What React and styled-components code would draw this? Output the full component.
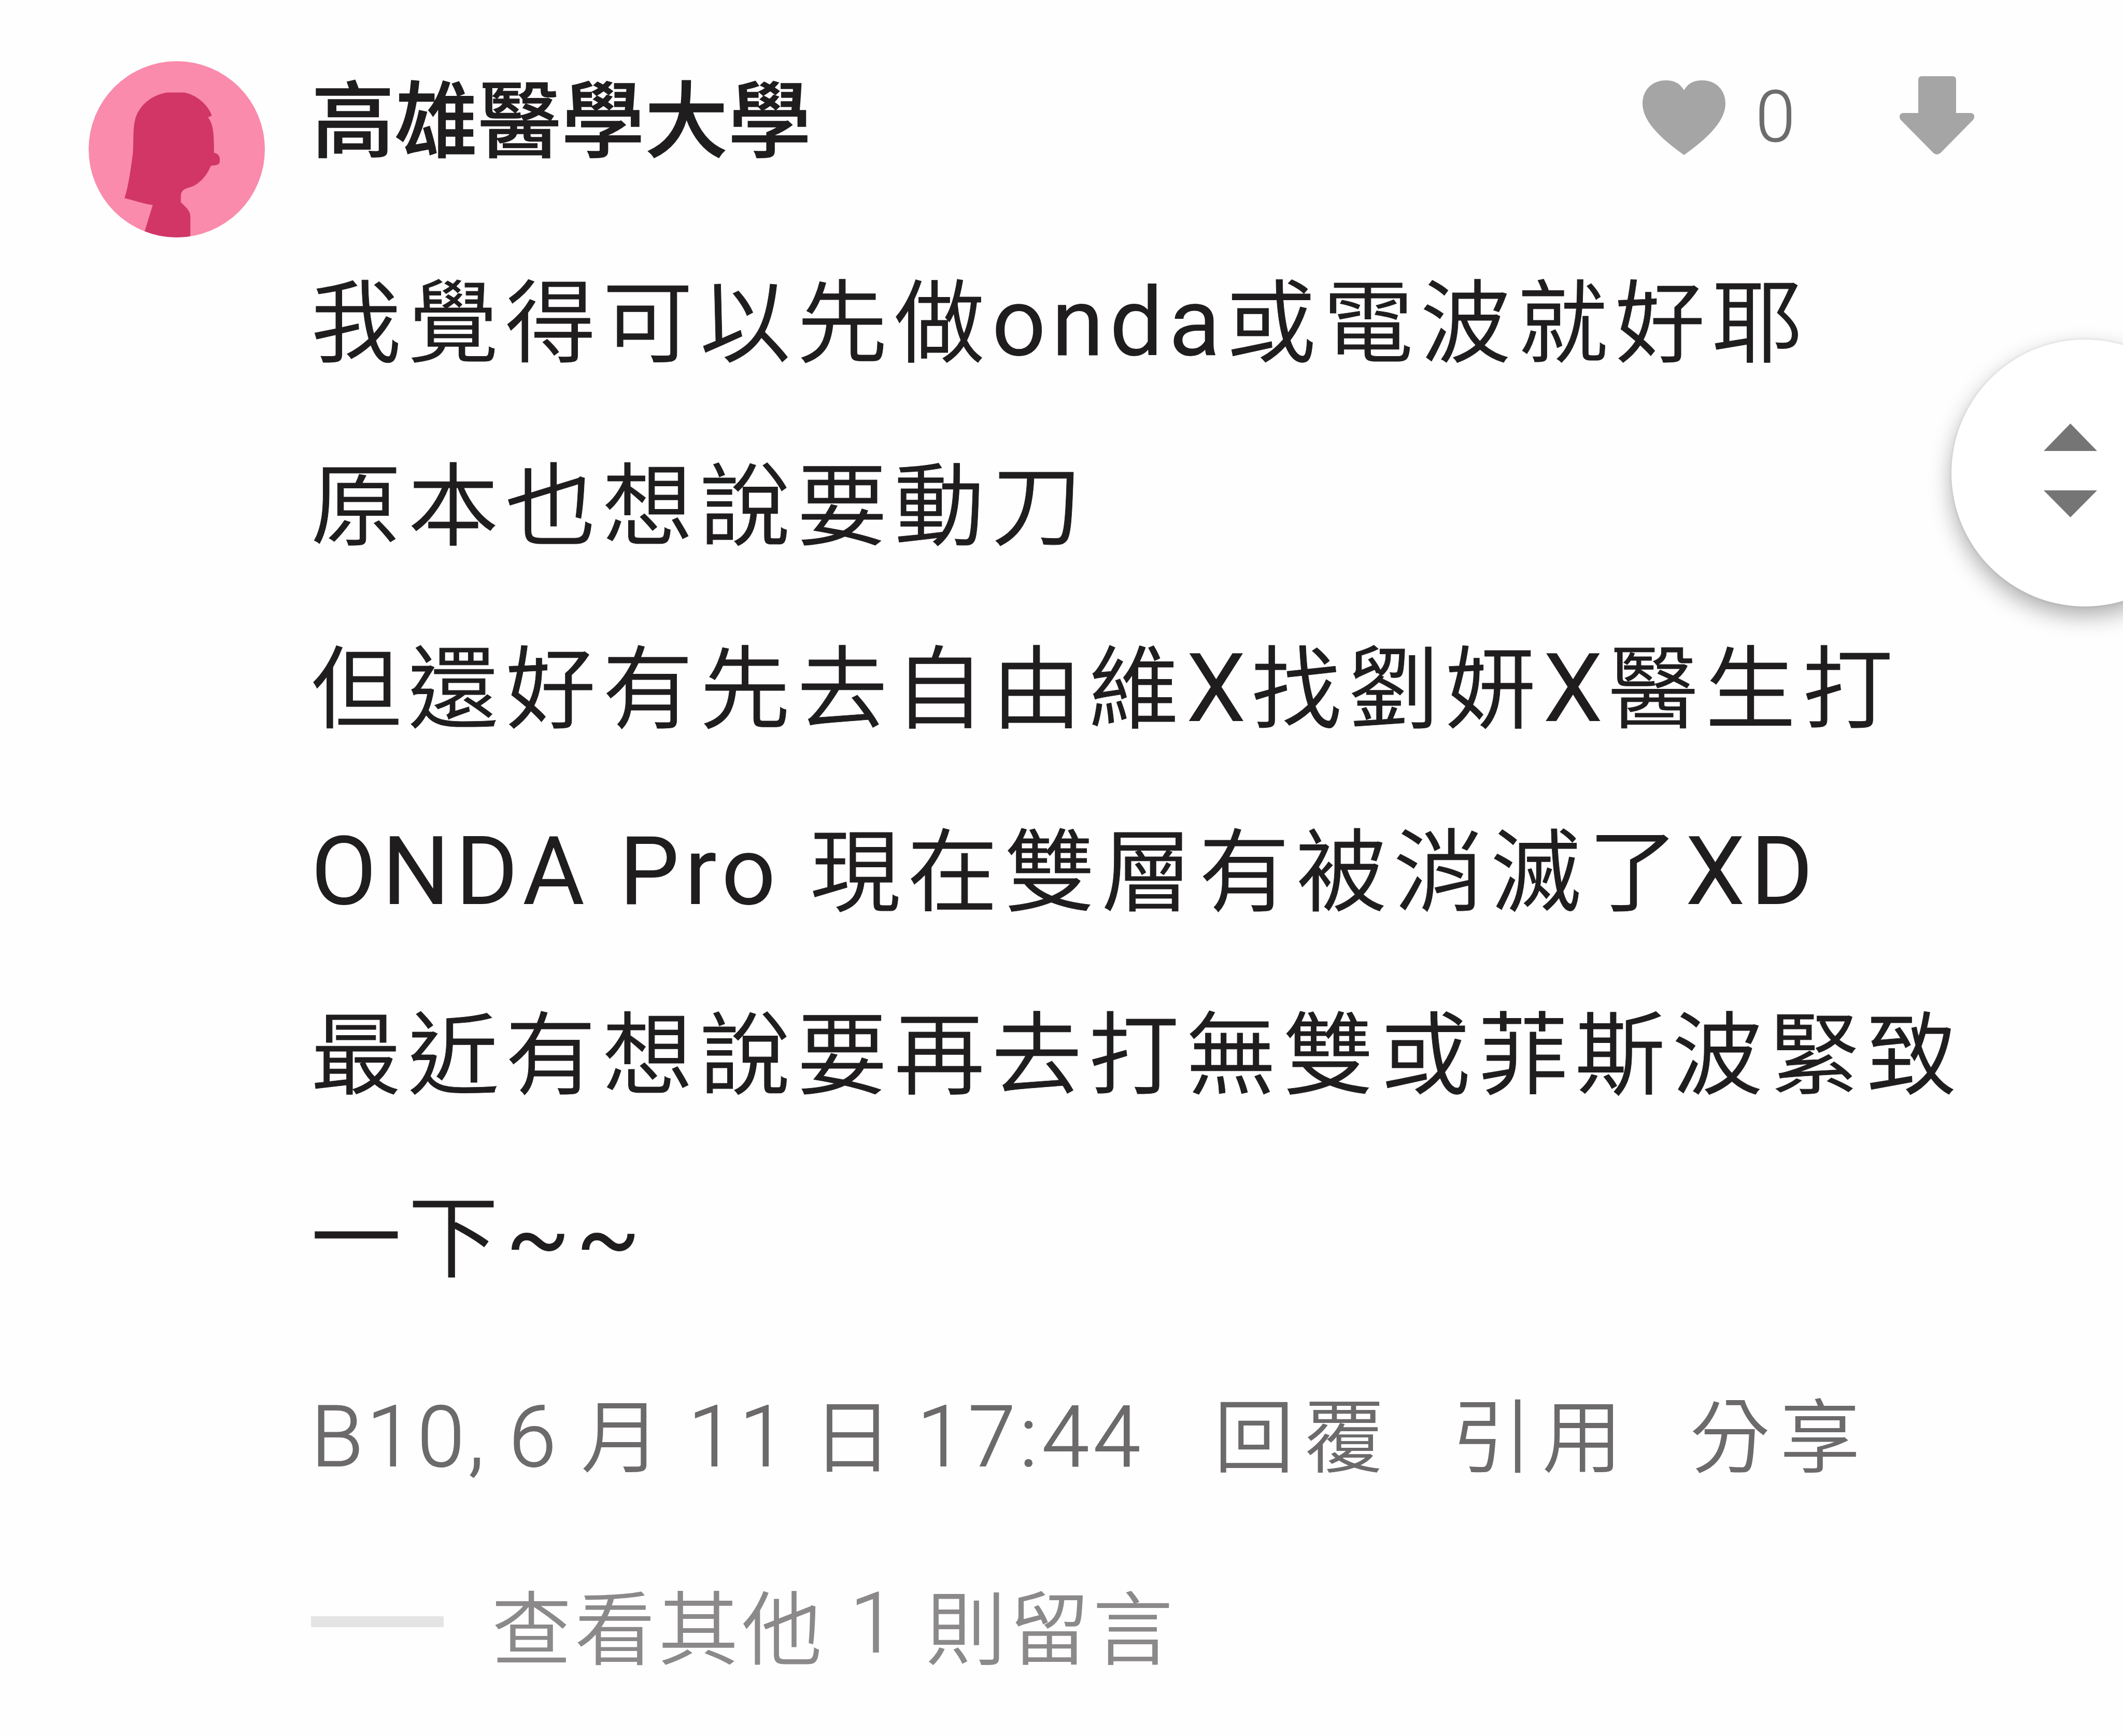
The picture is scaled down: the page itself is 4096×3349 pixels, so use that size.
import React from "react";
import styled, { createGlobalStyle } from "styled-components";

const GlobalStyle = createGlobalStyle`
  html, body { margin: 0; padding: 0; background: #fefefe; }
  * { box-sizing: border-box; }
`;

const Page = styled.main`
  position: relative;
  width: 4096px;
  height: 3349px;
  overflow: hidden;
  background: #fefefe;
  color: #1f1d1d;
  font-family: "Noto Sans CJK TC", sans-serif;
`;

const Comment = styled.article`
  display: grid;
  grid-template-columns: 340px 1fr;
  column-gap: 89px;
  padding: 118px 0 0 171px;
`;

const Avatar = styled.svg`
  display: block;
  width: 340px;
  height: 340px;
`;

const Content = styled.div`
  display: flex;
  flex-direction: column;
`;

const Header = styled.header`
  display: flex;
  align-items: center;
  height: 224px;
  margin-bottom: 91px;
`;

const Author = styled.h1`
  flex: none;
  width: 2569px;
  margin: -18px 0 0;
  padding-left: 1px;
  font-size: 160px;
  font-weight: 500;
  line-height: 224px;
  letter-spacing: 0.8px;
  -webkit-text-stroke: 1.6px currentColor;
`;

const LikeCount = styled.span`
  width: 78px;
  margin: -8px 200px 0 58px;
  color: #6c6c6c;
  font: 300 138px/224px Roboto, sans-serif;
  -webkit-text-stroke: 1px currentColor;
`;

const Icon = styled.svg`
  flex: none;
  display: block;
  width: ${(p) => p.$width}px;
  height: 152px;
  margin-top: -15px;
  fill: #a6a5a5;
`;

const Body = styled.div`
  font-size: 174px;
  font-weight: 350;
  line-height: 353px;
  letter-spacing: 13.6px;
  -webkit-text-stroke: 1px currentColor;
`;

const Line = styled.p`
  margin: 0;
  height: 353px;
  white-space: pre;
`;

const Latin = styled.span`
  font-family: Roboto, sans-serif;
  font-size: ${(p) => p.$size}px;
  font-weight: ${(p) => p.$weight || 400};
  letter-spacing: ${(p) => p.$spacing}px;
  -webkit-text-stroke: ${(p) => p.$stroke || 0}px currentColor;
`;

const Meta = styled.footer`
  display: flex;
  height: 240px;
  margin-top: 90px;
  line-height: 240px;
  font-size: 155px;
  font-weight: 350;
  letter-spacing: 19px;
  color: #6c6a6a;
  white-space: pre;
`;

const Stamp = styled.span`
  flex: none;
  width: 1742px;
  letter-spacing: 5px;
  word-spacing: -6px;
`;

const Month = styled.span`
  letter-spacing: 10px;
`;

const Action = styled.span`
  flex: none;
  width: 459px;
`;

const Replies = styled.div`
  display: flex;
  align-items: center;
  height: 200px;
  margin-top: 151px;
  line-height: 200px;
  font-size: 155px;
  font-weight: 350;
  letter-spacing: 6px;
  color: #8b8989;
  white-space: pre;
`;

const Rule = styled.span`
  width: 256px;
  height: 21px;
  margin: -8px 92px 0 0;
  background: #e4e4e4;
`;

const Scroller = styled.button`
  position: absolute;
  left: 3765px;
  top: 655px;
  width: 515px;
  height: 515px;
  padding: 0;
  border: 0;
  border-radius: 50%;
  background: #fff;
  box-shadow: 0 18px 44px rgba(0, 0, 0, 0.32), 0 0 6px rgba(0, 0, 0, 0.1);
`;

const Arrows = styled.svg`
  display: block;
  width: 103px;
  height: 181px;
  margin-left: 178px;
  margin-top: -11px;
  fill: #757575;
`;

const lines = [
  [["我覺得可以先做"], ["onda", 1], ["或電波就好耶"]],
  [["原本也想說要動刀"]],
  [["但還好有先去自由維"], ["X", 1], ["找劉妍"], ["X", 1], ["醫生打"]],
  [["ONDA Pro ", 1], ["現在雙層有被消滅了"], ["XD", 1]],
  [["最近有想說要再去打無雙或菲斯波緊致"]],
  [["一下"], ["~~", 1]],
];

export default function App() {
  return (
    <>
      <GlobalStyle />
      <Page>
        <Comment>
          <Avatar viewBox="0 0 1074 1074">
            <defs>
              <clipPath id="disc"><circle cx="537" cy="537" r="537" /></clipPath>
            </defs>
            <g clipPath="url(#disc)">
              <rect width="1074" height="1074" fill="#fa8bad" />
              <path fill="#d13667" d="M476 191H584C655 204 728 264 751 332L728 343C757 383 764 420 764 558C785 561 799 576 799 594V612C797 629 785 635 745 637C718 705 665 756 618 768C578 778 562 792 562 824V860L596 893C612 911 620 928 620 947V1074H330L391 876C335 871 285 849 219 835C245 753 259 640 270 558C274 490 269 414 283 358C303 274 379 208 476 191Z" />
            </g>
          </Avatar>
          <Content>
            <Header>
              <Author>高雄醫學大學</Author>
              <Icon $width={160} viewBox="0 0 160 152">
                <path d="M80 27C88 13 100 8 115 8C142 8 160 27 160 53C160 87 124 121 80 152C36 121 0 87 0 53C0 27 18 8 45 8C60 8 72 13 80 27Z" />
              </Icon>
              <LikeCount>0</LikeCount>
              <Icon $width={144} viewBox="0 0 144 152">
                <path d="M43 0H102Q109 0 109 7V71H138Q148 74 142 84L79 148Q72 154 65 148L2 84Q-4 74 6 71H36V7Q36 0 43 0Z" />
              </Icon>
            </Header>
            <Body>
              {lines.map((parts, i) => (
                <Line key={i}>
                  {parts.map(([text, latin], j) =>
                    latin ? <Latin key={j} $size={184} $spacing={10.4}>{text}</Latin> : text
                  )}
                </Line>
              ))}
            </Body>
            <Meta>
              <Stamp>
                <Latin $size={164} $spacing={6.8} $weight={300} $stroke={2}>B10, 6 </Latin>
                <Month>月</Month>
                <Latin $size={164} $spacing={8} $weight={300} $stroke={2}> 11 </Latin>日
                <Latin $size={164} $spacing={8} $weight={300} $stroke={2}> 17:44</Latin>
              </Stamp>
              <Action>回覆</Action>
              <Action>引用</Action>
              <Action>分享</Action>
            </Meta>
            <Replies>
              <Rule />
              查看其他<Latin $size={162} $spacing={8.4} $weight={300} $stroke={2}> 1 </Latin>則留言
            </Replies>
          </Content>
        </Comment>
        <Scroller>
          <Arrows viewBox="0 0 103 181">
            <path d="M51.500 0L103 53H0ZM0 129H103L51.500 181Z" />
          </Arrows>
        </Scroller>
      </Page>
    </>
  );
}
